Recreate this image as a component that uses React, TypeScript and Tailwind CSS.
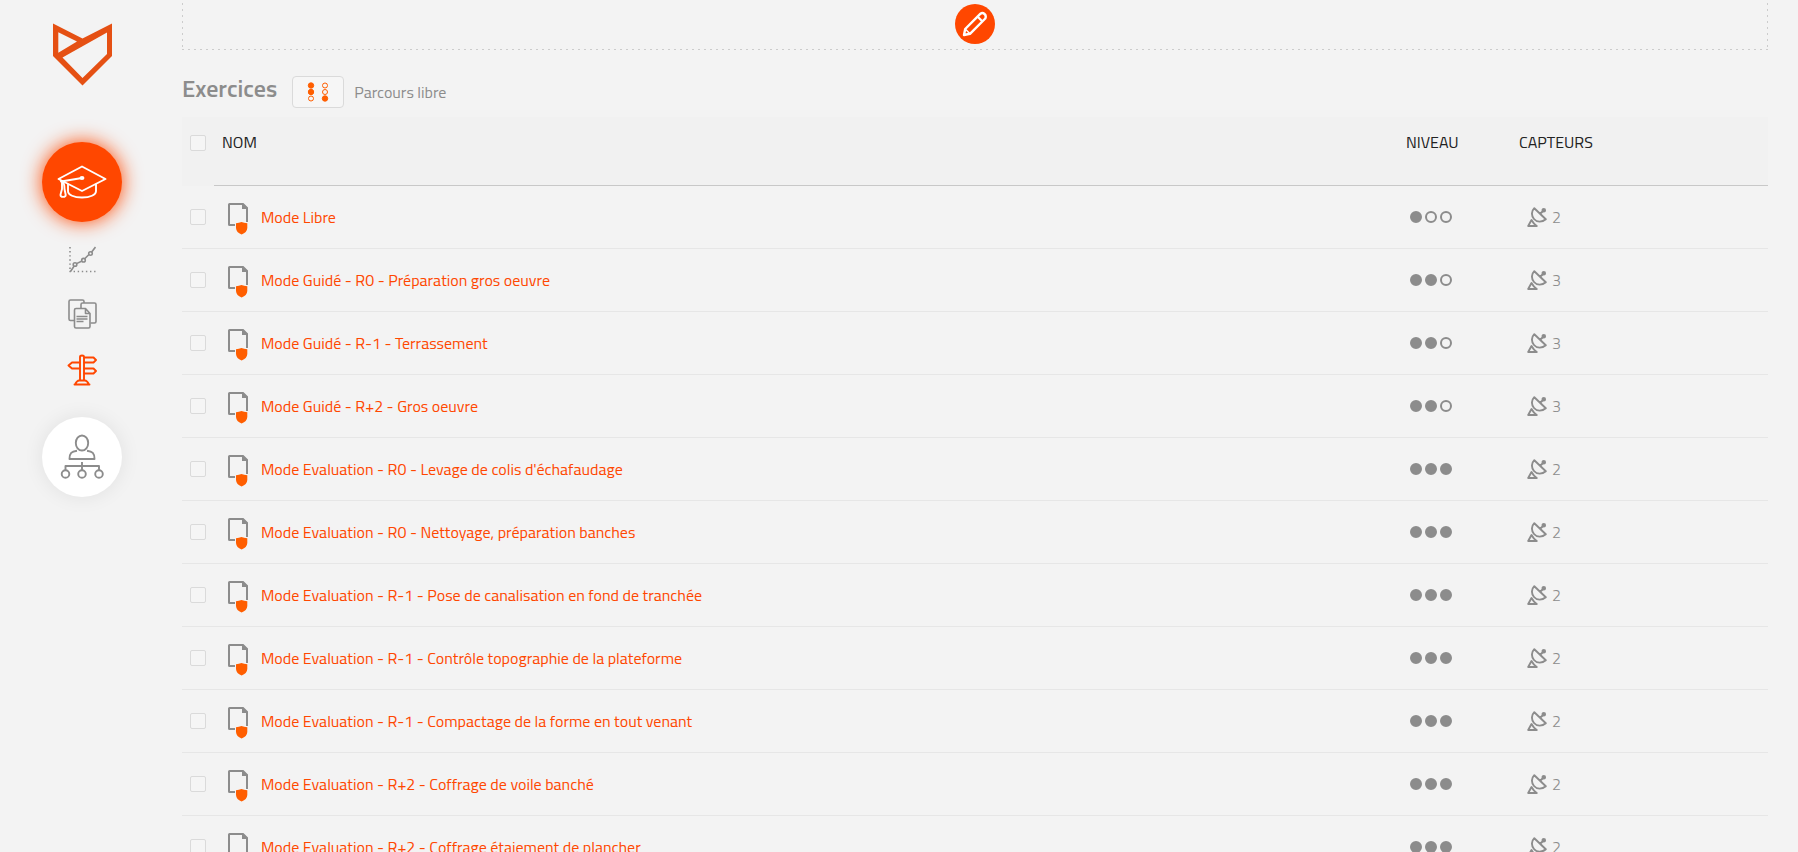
type Exercise = { name: string; level: number; sensors: number };

const exercises: Exercise[] = [
  { name: "Mode Libre", level: 1, sensors: 2 },
  { name: "Mode Guidé - R0 - Préparation gros oeuvre", level: 2, sensors: 3 },
  { name: "Mode Guidé - R-1 - Terrassement", level: 2, sensors: 3 },
  { name: "Mode Guidé - R+2 - Gros oeuvre", level: 2, sensors: 3 },
  { name: "Mode Evaluation - R0 - Levage de colis d'échafaudage", level: 3, sensors: 2 },
  { name: "Mode Evaluation - R0 - Nettoyage, préparation banches", level: 3, sensors: 2 },
  { name: "Mode Evaluation - R-1 - Pose de canalisation en fond de tranchée", level: 3, sensors: 2 },
  { name: "Mode Evaluation - R-1 - Contrôle topographie de la plateforme", level: 3, sensors: 2 },
  { name: "Mode Evaluation - R-1 - Compactage de la forme en tout venant", level: 3, sensors: 2 },
  { name: "Mode Evaluation - R+2 - Coffrage de voile banché", level: 3, sensors: 2 },
  { name: "Mode Evaluation - R+2 - Coffrage étaiement de plancher", level: 3, sensors: 2 },
];

function Logo() {
  return (
    <svg width="60" height="64" viewBox="0 0 60 64" fill="#e55013" fillRule="evenodd" aria-hidden="true">
      <path d="M1 .5 L30.500 15.500 L60 .5 V33 L30.500 62.500 L1 33 Z M6.300 9.300 V29.700 L25 18.500 Z M55 9.500 L10.500 34.500 L30.500 55 L55 31 Z" />
    </svg>
  );
}

function CapIcon() {
  return (
    <svg width="50" height="34" viewBox="0 0 50 34" fill="none" stroke="#fff" strokeWidth="1.900" strokeLinecap="round" strokeLinejoin="round" aria-hidden="true">
      <path d="M25 1.500 L48.500 14 L25 26 L1.500 14 Z" />
      <path d="M25 13 L4 16.500" />
      <ellipse cx="25" cy="13" rx="1.500" ry="1" fill="#fff" />
      <path d="M11 19.500 V26 C11 30 17 32.500 25 32.500 S39 30 39 26 V19.500" />
      <path d="M5 16 C7 17.500 7.500 19 7.500 24 M5 16 V24 C4 28 3.500 29 3.500 30 C3.500 32.500 8.700 32.500 8.700 30 C8.700 29 8 27 7.500 24" />
    </svg>
  );
}

function ChartIcon() {
  return (
    <svg width="28" height="28" viewBox="0 0 28 28" fill="none" stroke="#8c8c8c" strokeWidth="1.600" aria-hidden="true">
      <path d="M2 1 V26 M1.500 25.500 H27.500" strokeDasharray="1.400 2.700" />
      <path d="M2.500 25.500 L6.200 20 M8.500 17.600 L13.500 15.200 M16.700 12.700 L21 8.500 M23.500 6.300 L27.500 1" />
      <circle cx="7" cy="18.500" r="1.800" />
      <circle cx="15.500" cy="14.200" r="1.800" />
      <circle cx="22.500" cy="7.500" r="1.800" />
    </svg>
  );
}

function DocumentsIcon() {
  return (
    <svg width="30" height="30" viewBox="0 0 30 30" fill="none" stroke="#8c8c8c" strokeWidth="1.600" strokeLinejoin="round" aria-hidden="true">
      <path d="M7.500 21.500 H3.500 Q2 21.500 2 20 V2.500 Q2 1 3.500 1 H15.500 Q17 1 17 2.500 V4 M14 9 V5.500 Q14 4 15.500 4 H27.500 Q29 4 29 5.500 V22.500 Q29 24 27.500 24 H23.500" />
      <path d="M9 9.500 H18.500 L23 14.500 V27.500 Q23 29 21.500 29 H9 Q7.500 29 7.500 27.500 V11 Q7.500 9.500 9 9.500 Z M18.500 9.500 V14.500 H23" />
      <path d="M9.500 17.500 H20.500 M9.500 20 H20.500 M9.500 22.500 H16.500" />
    </svg>
  );
}

function SignpostIcon() {
  return (
    <svg width="30" height="32" viewBox="0 0 30 32" fill="none" stroke="#ff4700" strokeWidth="1.900" strokeLinecap="round" strokeLinejoin="round" aria-hidden="true">
      <path d="M13 26 V3 Q13 1.500 15 1.500 T17 3 V26" />
      <path d="M17.500 3.500 H26.500 L29 6 L26.500 8.500 H17.500 M12.500 8.500 H5 L1.500 11.500 L5 14.500 H12.500 M17.500 14.500 H26.500 L29 17 L26.500 19.500 H17.500" />
      <path d="M8 30.500 Q10 26.500 12 26.500 H18 Q20 26.500 22 30.500 M7.500 30.500 H22.500" />
    </svg>
  );
}

function HierarchyIcon() {
  return (
    <svg width="44" height="46" viewBox="0 0 44 46" fill="none" stroke="#8c8c8c" strokeWidth="1.900" strokeLinejoin="round" aria-hidden="true">
      <ellipse cx="22" cy="9" rx="6.200" ry="7.500" />
      <path d="M17 16.700 C11.500 17.500 9.500 19 9.500 25 H34.500 C34.500 19 32.500 17.500 27 16.700" />
      <path d="M22 28 V36 M5.500 36 V32 H39 V36" />
      <circle cx="5.500" cy="40" r="3.800" />
      <circle cx="22" cy="40" r="3.800" />
      <circle cx="39" cy="40" r="3.800" />
    </svg>
  );
}

function PencilIcon() {
  return (
    <svg width="26" height="26" viewBox="0 0 26 26" fill="none" stroke="#fff" strokeWidth="2.400" strokeLinejoin="round" aria-hidden="true">
      <path d="M2 24 L3.200 18 L18.500 2.700 Q20.500 1.200 22.500 3 T23.300 7.500 L8 22.800 Z" />
      <path d="M3.200 18 L8 22.800" strokeWidth="1.500" />
      <path d="M15.500 5.500 L20.500 10.500" strokeWidth="2.200" />
    </svg>
  );
}

function PathIcon() {
  return (
    <svg width="22" height="20" viewBox="0 0 22 20" fill="none" stroke="#ff5e00" strokeWidth="1" aria-hidden="true">
      <circle cx="4" cy="3.500" r="2.700" fill="#ff5e00" />
      <circle cx="4" cy="10" r="2.700" fill="#ff5e00" />
      <circle cx="4" cy="16.500" r="2.500" />
      <circle cx="18" cy="3.500" r="2.500" />
      <circle cx="18" cy="10" r="2.500" />
      <circle cx="18" cy="16.500" r="2.700" fill="#ff5e00" />
    </svg>
  );
}

function ExerciseIcon() {
  return (
    <svg width="20" height="32" viewBox="0 0 20 32" className="shrink-0" aria-hidden="true">
      <path d="M7 22 H1.500 Q1 22 1 21.500 V1.500 Q1 1 1.500 1 H15 L19 5 V19" fill="none" stroke="#8c8c8c" strokeWidth="2" />
      <path d="M14 1 H15.500 L20 5.500 V6 H14 Z" fill="#8c8c8c" />
      <path d="M8 20.300 Q11 20 13.500 19 Q16 20 19.300 20.300 V25 Q19 29.500 13.600 31.500 Q8.300 29.500 8 25 Z" fill="#ff5e00" />
    </svg>
  );
}

function Level({ value }: { value: number }) {
  return (
    <svg width="42" height="12" viewBox="0 0 42 12" stroke="#8c8c8c" strokeWidth="2" role="img" aria-label={`Niveau ${value}`}>
      {[1, 2, 3].map((n) => (
        <circle key={n} cx={n * 15 - 9} cy="6" r="5" fill={n <= value ? "#8c8c8c" : "none"} />
      ))}
    </svg>
  );
}

function SensorIcon() {
  return (
    <svg width="20" height="20" viewBox="0 0 20 20" fill="none" stroke="#8c8c8c" strokeWidth="1.900" strokeLinejoin="round" aria-hidden="true">
      <path d="M7.300 1.200 L18.800 12.300 C15 15.500 10 15.500 7 12 C4 8.500 4.500 4 7.300 1.200 Z M13 7 L16 4" />
      <circle cx="16.800" cy="3.200" r="1.300" fill="#8c8c8c" />
      <path d="M4.500 13 L1.200 19 H9.800 Q7 17.500 4.500 13 Z" />
    </svg>
  );
}

function Checkbox({ label }: { label: string }) {
  return (
    <input
      type="checkbox"
      aria-label={label}
      className="block size-4 appearance-none rounded-xs border border-[#dadada] bg-[#f5f5f5] checked:bg-[#ff4700]"
    />
  );
}

export default function App() {
  return (
    <div className="flex h-screen overflow-hidden bg-[#f3f3f3] font-['Titillium_Web','Open_Sans',sans-serif] text-base text-[#8c8c8c]">
      <nav className="flex w-[164px] shrink-0 flex-col items-center pt-[23px]" aria-label="Navigation">
        <a href="#accueil" aria-label="Accueil">
          <Logo />
        </a>
        <a
          href="#formation"
          aria-label="Formation"
          className="mt-[55px] flex size-20 shrink-0 items-center justify-center rounded-full bg-[#ff4700] shadow-[0_0_20px_#ff4700]"
        >
          <CapIcon />
        </a>
        <div className="mt-6 flex flex-col items-center gap-[25px]">
          <a href="#statistiques" aria-label="Statistiques">
            <ChartIcon />
          </a>
          <a href="#documents" aria-label="Documents">
            <DocumentsIcon />
          </a>
          <a href="#parcours" aria-label="Parcours">
            <SignpostIcon />
          </a>
        </div>
        <a
          href="#groupes"
          aria-label="Groupes"
          className="mt-[31px] flex size-20 shrink-0 items-center justify-center rounded-full bg-white shadow-[0_0_20px_#00000014]"
        >
          <HierarchyIcon />
        </a>
      </nav>

      <main className="min-w-0 flex-1 pr-[30px] pl-[18px]">
        <section className="flex h-[50px] justify-center bg-[linear-gradient(90deg,#cccccc_2px,transparent_2px),linear-gradient(#cccccc_2px,transparent_2px),linear-gradient(#cccccc_2px,transparent_2px)] [background-position:left_bottom,left_3px,right_3px] [background-repeat:repeat-x,repeat-y,repeat-y] [background-size:6px_1px,1px_6px,1px_6px] pt-1">
          <button type="button" aria-label="Modifier" className="flex size-10 items-center justify-center rounded-full bg-[#ff4700]">
            <PencilIcon />
          </button>
        </section>

        <div className="flex h-[67px] items-center pt-4">
          <h1 className="pb-2 text-2xl leading-8 font-semibold">Exercices</h1>
          <button
            type="button"
            aria-label="Changer de parcours"
            className="ml-[15px] flex h-8 w-[52px] items-center justify-center rounded-sm border border-[#dadada] bg-[#f6f6f6]"
          >
            <PathIcon />
          </button>
          <span className="ml-[10px]">Parcours libre</span>
        </div>

        <table className="w-full table-fixed border-separate border-spacing-0 text-left">
          <colgroup>
            <col className="w-8" />
            <col />
            <col className="w-[113px]" />
            <col className="w-[249px]" />
          </colgroup>
          <thead>
            <tr className="h-[69px] bg-[#f1f1f1] align-top text-[#222222]">
              <th className="pt-[18px] pl-2">
                <Checkbox label="Tout sélectionner" />
              </th>
              <th className="border-b border-[#c8c8c8] pt-[13px] pl-2 font-normal">NOM</th>
              <th className="border-b border-[#c8c8c8] pt-[13px] font-normal">NIVEAU</th>
              <th className="border-b border-[#c8c8c8] pt-[13px] font-normal">CAPTEURS</th>
            </tr>
          </thead>
          <tbody>
            {exercises.map((exercise) => (
              <tr key={exercise.name} className="h-[63px]">
                <td className="border-b border-[#e6e6e6] pl-2">
                  <Checkbox label={exercise.name} />
                </td>
                <td className="border-b border-[#e6e6e6] pl-[14px]">
                  <a href="#exercice" className="flex items-center gap-[13px] whitespace-nowrap text-[#ff4700]">
                    <span className="pt-1">
                      <ExerciseIcon />
                    </span>
                    {exercise.name}
                  </a>
                </td>
                <td className="border-b border-[#e6e6e6] pl-1">
                  <Level value={exercise.level} />
                </td>
                <td className="border-b border-[#e6e6e6] pl-2">
                  <span className="flex items-center gap-[5px]">
                    <SensorIcon />
                    <span className="font-light">{exercise.sensors}</span>
                  </span>
                </td>
              </tr>
            ))}
          </tbody>
        </table>
      </main>
    </div>
  );
}
